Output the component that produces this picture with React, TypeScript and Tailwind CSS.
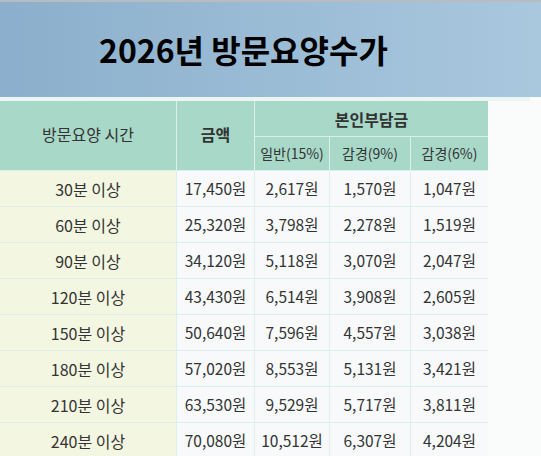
const rows = [
  ["30분 이상", "17,450원", "2,617원", "1,570원", "1,047원"],
  ["60분 이상", "25,320원", "3,798원", "2,278원", "1,519원"],
  ["90분 이상", "34,120원", "5,118원", "3,070원", "2,047원"],
  ["120분 이상", "43,430원", "6,514원", "3,908원", "2,605원"],
  ["150분 이상", "50,640원", "7,596원", "4,557원", "3,038원"],
  ["180분 이상", "57,020원", "8,553원", "5,131원", "3,421원"],
  ["210분 이상", "63,530원", "9,529원", "5,717원", "3,811원"],
  ["240분 이상", "70,080원", "10,512원", "6,307원", "4,204원"],
];

const font = { fontFamily: '"Noto Sans CJK KR", "Noto Sans", sans-serif' };

export default function App() {
  return (
    <div className="w-[541px] h-[456px] overflow-hidden bg-[#fafbfb]" style={font}>
      {/* top edge */}
      <div className="h-[2px] bg-[#b7bcc2]" />

      {/* title banner */}
      <div className="h-[95px] bg-gradient-to-r from-[#8bafcc] to-[#a9c8de] flex items-center pl-[99px] pb-[2px]">
        <h1 className="text-[32px] font-bold text-black leading-none">
          2026년 방문요양수가
        </h1>
      </div>

      <div className="h-[4px] bg-[#eaf5f4] w-[530px]" />

      {/* table */}
      <div className="w-[488px] grid grid-cols-[176px_77px_74px_80px_77px] gap-px bg-[#dcefee] text-[#333]">
        <div className="row-span-2 bg-[#a8d8c8] flex items-center justify-center text-[16px] pb-[4px]">
          방문요양 시간
        </div>
        <div className="row-span-2 bg-[#a8d8c8] flex items-center justify-center text-[16px] font-semibold pb-[4px]">
          금액
        </div>
        <div className="col-span-3 h-[35px] bg-[#a8d8c8] flex items-center justify-center text-[16px] font-semibold">
          본인부담금
        </div>
        <div className="h-[33px] bg-[#a8d8c8] flex items-center justify-center text-[14px]">일반(15%)</div>
        <div className="h-[33px] bg-[#a8d8c8] flex items-center justify-center text-[14px]">감경(9%)</div>
        <div className="h-[33px] bg-[#a8d8c8] flex items-center justify-center text-[14px]">감경(6%)</div>

        {rows.map((r) => (
          <>
            <div key={r[0]} className="h-[35px] bg-[#f3f7e1] flex items-center justify-center text-[16px]">
              {r[0]}
            </div>
            {r.slice(1).map((v, i) => (
              <div key={r[0] + i} className="h-[35px] bg-[#f7f9fa] flex items-center justify-center text-[15.5px]">
                {v}
              </div>
            ))}
          </>
        ))}
      </div>
    </div>
  );
}
